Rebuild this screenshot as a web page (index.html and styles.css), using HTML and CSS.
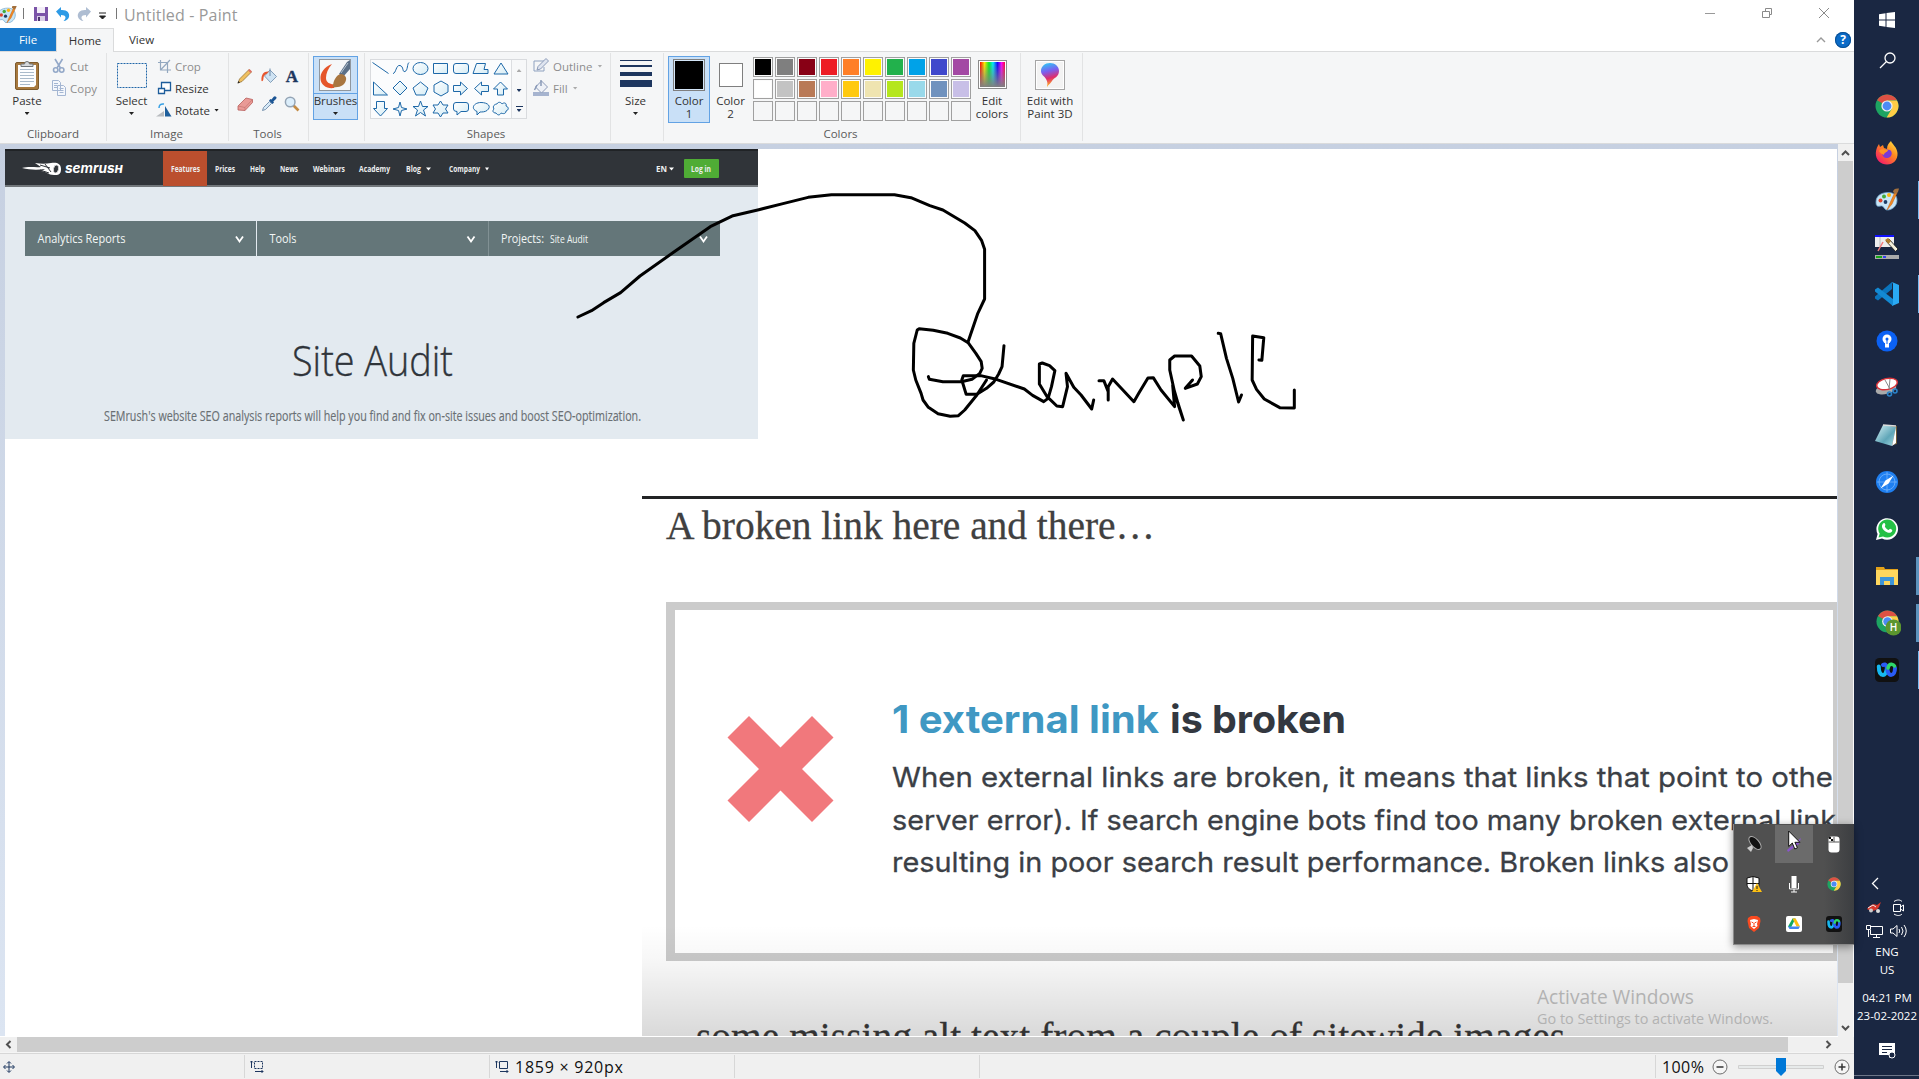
FILE: index.html
```html
<!DOCTYPE html>
<html lang="en">
<head>
<meta charset="utf-8">
<title>Untitled - Paint</title>
<link rel="stylesheet" href="styles.css">
</head>
<body>
<svg class="defs" width="0" height="0">
  <defs>
    <linearGradient id="shapeFill" x1="0" y1="0" x2="1" y2="1"><stop offset="0" stop-color="#fff"/><stop offset="1" stop-color="#d5ecf5"/></linearGradient>
    <linearGradient id="fade" x1="0" y1="0" x2="0" y2="1"><stop offset="0" stop-color="#000" stop-opacity="0"/><stop offset=".3" stop-color="#000" stop-opacity=".03"/><stop offset="1" stop-color="#000" stop-opacity=".15"/></linearGradient>
    <linearGradient id="rainbow"><stop offset="0" stop-color="#f00"/><stop offset=".18" stop-color="#fe0"/><stop offset=".36" stop-color="#0e2"/><stop offset=".52" stop-color="#0ef"/><stop offset=".7" stop-color="#10f"/><stop offset=".86" stop-color="#f0f"/><stop offset="1" stop-color="#f03"/></linearGradient>
    <linearGradient id="toGrey" x1="0" y1="0" x2="0" y2="1"><stop offset="0" stop-color="#808080" stop-opacity="0"/><stop offset="1" stop-color="#808080"/></linearGradient>
    <linearGradient id="drop" x1="0" y1="0" x2=".2" y2="1"><stop offset="0" stop-color="#23d5f5"/><stop offset=".4" stop-color="#7a5ff0"/><stop offset=".7" stop-color="#e02d6c"/><stop offset="1" stop-color="#ffb01f"/></linearGradient>
    <linearGradient id="fox" x1="1" y1="0" x2=".2" y2="1"><stop offset="0" stop-color="#fff14a"/><stop offset=".45" stop-color="#ff8a1e"/><stop offset="1" stop-color="#f5156c"/></linearGradient>
    <linearGradient id="note" x1="0" y1="0" x2="1" y2="1"><stop offset="0" stop-color="#d9f3f7"/><stop offset=".6" stop-color="#5fa6b8"/><stop offset="1" stop-color="#a8dbe4"/></linearGradient>
    <symbol id="chrome" viewBox="0 0 24 24">
      <circle cx="12" cy="12" r="11.5" fill="#1da462"/>
      <path d="M12 12 2.1 6.2A11.5 11.5 0 0 1 22 6.3L12 6.4z" fill="#dd5144"/>
      <path d="M12 6.4H22A11.5 11.5 0 0 1 11.6 23.5L16.8 14.8z" fill="#ffcd46"/>
      <circle cx="12" cy="12" r="5.6" fill="#f1f1f1"/><circle cx="12" cy="12" r="4.4" fill="#4c8bf5"/>
    </symbol>
    <symbol id="webex" viewBox="0 0 24 24">
      <rect width="24" height="24" rx="4.5" fill="#111"/>
      <path d="M3.800 8.500c0 5 1.500 8.500 4.200 8.500s3.500-4 4-7.500" fill="none" stroke="#16b8f0" stroke-width="4" stroke-linecap="round"/>
      <path d="M8 7c3-2 4 2 4.500 5s1.500 5 3.500 5c2.500 0 4-3 4-7" fill="none" stroke="#2a5cf5" stroke-width="4" stroke-linecap="round"/>
      <path d="M13 10c.6-2.500 1.500-4 3.500-3.800 1.500.2 2.500.8 3 1.800" fill="none" stroke="#2fd66a" stroke-width="3.600" stroke-linecap="round"/>
    </symbol>
    <symbol id="palette" viewBox="0 0 24 24">
      <path d="M1 14C1 8 6 4.500 13 4.500c6 0 9 3 9 8s-4 9-9 9.500c-3 .4-3.500-2-5-3.500C6 17 4 19 2.300 18 1.200 17.300 1 16 1 14z" fill="#c9e6f6" stroke="#6fa5cd" stroke-width=".8"/>
      <circle cx="5.500" cy="12.500" r="2" fill="#e0462c"/><circle cx="9" cy="8.500" r="2" fill="#43ab3b"/><circle cx="14" cy="7" r="2" fill="#f9b412"/><circle cx="10.500" cy="14" r="1.900" fill="#1e3e66"/>
      <path d="m12 22 3-7 5-11 2 1-5 11z" fill="#f18a24" stroke="#c25e10" stroke-width=".5"/><path d="M18 4c0-2 2-4 6-3.500-.5 2-1 4.500-3 5.500z" fill="#a3703d"/>
    </symbol>
  </defs>
</svg>

<div class="desktop">
  <main class="window">
    <header class="titlebar">
      <svg class="app-icon" width="17" height="17" viewBox="4 2 20 20"><use href="#palette" width="24" height="24"/></svg>
      <span class="bar"></span>
      <svg class="qa-save" width="14" height="14" viewBox="0 0 14 14"><path d="M0 0h14v14H0z" fill="#7b54a8"/><path d="M3 0h8v6H3z" fill="#f3eef8"/><path d="M3 9h8v5H3z" fill="#d9cfe6"/><path d="M4 10h2v4H4z" fill="#4d3570"/></svg>
      <svg class="qa-undo" width="14" height="14" viewBox="0 0 14 14"><path d="M0 4.500 5 0v3c6-.5 9 3 8 7-.5 2-3 4-5.500 4 3-2.500 3-6-2.500-6v2.500z" fill="#2e9be6"/></svg>
      <svg class="qa-redo" width="14" height="14" viewBox="0 0 14 14"><path d="M14 4.500 9 0v3C3 2.500 0 6 1 10c.5 2 3 4 5.500 4-3-2.500-3-6 2.500-6v2.500z" fill="#aebdd2"/></svg>
      <svg class="qa-more" width="7" height="8" viewBox="0 0 7 8"><path d="M0 1h7M.5 4 3.500 7l3-3z" stroke="#222" fill="#222" stroke-width="1"/></svg>
      <span class="bar"></span>
      <h1 class="title">Untitled - Paint</h1>
      <div class="window-buttons">
        <svg width="12" height="12"><path d="M1 6.500h10" stroke="#999"/></svg>
        <svg width="12" height="12" fill="none" stroke="#8a8a8a"><path d="M1.500 4.500h7v6h-7zM4.500 4V1.500h6v6H9"/></svg>
        <svg width="12" height="12"><path d="m1 1 10 10M11 1 1 11" stroke="#8a8a8a"/></svg>
      </div>
    </header>

    <nav class="tabs">
      <a class="tab tab-file">File</a><a class="tab tab-home">Home</a><a class="tab tab-view">View</a>
      <div class="tab-tools">
        <svg width="10" height="6"><path d="m1 5 4-4 4 4" fill="none" stroke="#999" stroke-width="1.400"/></svg>
        <span class="help">?</span>
      </div>
    </nav>

    <section class="ribbon">
      <div class="group g-clipboard">
        <div class="group-body">
          <div class="big">
            <span class="big-icon"><svg width="24" height="31" viewBox="0 0 24 31"><rect x=".5" y="2.500" width="23" height="27" rx="1.500" fill="#a7793f" stroke="#7c5a2d"/><path d="M3 5h18v20l-2 2H3z" fill="#fcfdff"/><path d="M5 9.500h14M5 12.500h14M5 15.500h14M5 18.500h14M5 21.500h14M5 24.500h10" stroke="#a9bacb"/><path d="M6 6.500V4h3.500a2.500 2.500 0 0 1 5 0H18v2.500z" fill="#d6d9dc" stroke="#6f7478"/></svg></span>
            <span>Paste</span><i class="caret"></i>
          </div>
          <div class="small-list">
            <div class="small off"><svg width="16" height="16" viewBox="0 0 16 16" fill="none" stroke="#93a8c8" stroke-width="1.600"><path d="m4 1 5.500 9M11.500 1 6 10"/><circle cx="4.700" cy="12" r="2.200"/><circle cx="10.700" cy="12" r="2.200"/></svg>Cut</div>
            <div class="small off"><svg width="16" height="16" viewBox="0 0 16 16" fill="#f4f7fc" stroke="#a4b6d2"><path d="M1.500.5h6l2 2v8h-8zM6.500 5.500h6l2 2v8h-8z"/><path d="M3 3.500h4M3 5.500h3M3 7.500h3M8.500 8.500h4M8.500 10.500h4M8.500 12.500h4"/></svg>Copy</div>
          </div>
        </div>
        <div class="group-label">Clipboard</div>
      </div>

      <div class="group g-image">
        <div class="group-body">
          <div class="big">
            <span class="big-icon"><svg width="30" height="25"><rect x=".5" y=".5" width="29" height="24" fill="none" stroke="#1f66a8" stroke-dasharray="2 1"/></svg></span>
            <span>Select</span><i class="caret"></i>
          </div>
          <div class="small-list">
            <div class="small off"><svg width="16" height="16" viewBox="0 0 16 16" fill="none" stroke="#93a8c0" stroke-width="1.200"><path d="M4.500 2v10H15M2 4.500h9.500V15M4.500 12 14 2"/></svg>Crop</div>
            <div class="small"><svg width="16" height="16" viewBox="0 0 16 16" fill="#fff" stroke="#1d5d9b" stroke-width="1.300"><path d="M5.500 2.500h9v8h-9z"/><path d="M2.500 8.500h6v5h-6z"/></svg>Resize</div>
            <div class="small"><svg width="16" height="16" viewBox="0 0 16 16"><path d="M9 4v10.500h6.500z" fill="#1f5f9c"/><path d="M0 14.500h8V9z" fill="#b9bcc0"/><path d="M3 6c0-3 2-4.500 5-4" fill="none" stroke="#37a0e4" stroke-width="1.500"/></svg>Rotate<i class="caret"></i></div>
          </div>
        </div>
        <div class="group-label">Image</div>
      </div>

      <div class="group g-tools">
        <div class="group-body">
          <div class="tool-grid">
            <svg width="16" height="16" viewBox="0 0 16 16"><path d="m1 15 1.500-4L12 1.500l2.500 2.500L5 13.500z" fill="#f0c060" stroke="#8d6b32" stroke-width=".7"/><path d="m11 2.500 1.500-1.500L15 3.500 13.500 5z" fill="#de7468"/><path d="m.5 15.500 1-2.500L3 14.500z" fill="#222"/></svg>
            <svg width="16" height="16" viewBox="0 0 16 16"><path d="m9 2 6.500 6.500-6 6L3.500 8z" fill="#cfe3f3" stroke="#6d8cab" stroke-width=".8"/><path d="M9 .5V8" stroke="#6d8cab"/><path d="M8 3.500C3 3 0 6 .5 13c1 .5 2-.5 2-3 0-2 1.500-3.500 3-4z" fill="#e8552d"/></svg>
            <b class="tool-text">A</b>
            <svg width="16" height="16" viewBox="0 0 16 16"><path d="m1 10 8-8 6.500 1.500v3L8 14.500 1 14z" fill="#e99a96" stroke="#b75e5c" stroke-width=".8"/><path d="m1 10 7 1.500 7.500-8M8 11.500v3" stroke="#c87773" fill="none" stroke-width=".8"/></svg>
            <svg width="16" height="16" viewBox="0 0 16 16"><path d="m1.500 14.500 1-3 6-6 2 2-6 6z" fill="#d6e9f7" stroke="#5f7e9e" stroke-width=".8"/><path d="M8 4.500 11.500 8 13 6.500 12.300 5.600 15 3a1.600 1.600 0 0 0-2.300-2.300L10.500 3.500 9.500 3z" fill="#1c5594"/></svg>
            <svg width="16" height="16" viewBox="0 0 16 16"><path d="m9.500 9.500 5 5" stroke="#c48b45" stroke-width="2.600"/><circle cx="6.200" cy="6" r="4.800" fill="#dceefb" stroke="#94a4b5" stroke-width="1.500"/></svg>
          </div>
        </div>
        <div class="group-label">Tools</div>
      </div>

      <div class="group g-brushes">
        <div class="group-body">
          <div class="big selected split">
            <span class="big-icon"><svg width="32" height="32" viewBox="0 0 32 32"><rect x=".5" y=".5" width="31" height="31" fill="#f5f7f9" stroke="#90979e"/><path d="M13 5C5 8 1 14 1.500 20c.5 6 6 10 13.500 9l2-4c-5 1-10-1-10-6 0-5 2-9 6-14z" fill="#e5552a"/><path d="m20 15 8-12 3-2v9l-7 8z" fill="#5b7088"/><path d="m22 14 7-10" stroke="#b5c3d1"/><path d="M14 28c0-6 3-12 8-13 3 0 6 3 5 6-1 5-6 8-13 7z" fill="#a87640"/></svg></span>
            <span>Brushes</span><i class="caret"></i>
          </div>
        </div>
      </div>

      <div class="group g-shapes">
        <div class="group-body">
          <div class="gallery">
            <svg class="shapes" width="141" height="58" viewBox="0 0 141 58" fill="url(#shapeFill)" stroke="#1d68a8" stroke-width="1">
              <path d="m2.500 3.500 16 11" fill="none"/><path d="M23 14.500c3 0 3-9 7-8s2 7 5 6 2-8 4-9" fill="none"/><ellipse cx="50.500" cy="9.500" rx="7.500" ry="6"/><path d="M63.500 4.500h14v10h-14z"/><rect x="83.500" y="4.500" width="15" height="10" rx="2.500"/><path d="m103 14.500 3.500-10h9l-1.500 6h4v4z"/><path d="m131 4 7 11h-14z"/>
              <path d="M3.500 23v13h14z"/><path d="m30 22 7 7-7 7-7-7z"/><path d="m50.500 23 7.500 6-3 7h-9l-3-7z"/><path d="m71 22 7 4v7l-7 4-7-4v-7z"/><path d="M83.500 26.500h7V23l7 6.500-7 6.500v-3.500h-7z"/><path d="M118.500 26.500h-7V23l-7 6.500 7 6.500v-3.500h7z"/><path d="m130.500 23 7 7h-4v6h-6v-6h-4z"/>
              <path d="m10.500 57-7-7.500h3v-7h8v7h3z"/><path d="m30 43 1.500 5.500L37 50l-5.500 1.500L30 57l-1.500-5.500L23 50l5.500-1.500z"/><path d="m50.500 42 2 5.500H58l-4.500 3.500 2 6-5-3.500-5 3.500 2-6-4.500-3.500h5.500z"/><path d="m70.500 42 2.500 4h5l-2.500 4 2.500 4h-5l-2.500 4-2.500-4h-5l2.500-4-2.500-4h5z"/><path d="M86 43.500h10q2.500 0 2.500 2.500v4q0 2.500-2.500 2.500h-5L87 56v-3.500q-3.500 0-3.500-2.500v-4q0-2.500 2.500-2.500z"/><path d="M107 56v-3.500c-7-3-3-9 4-9s11 4 6 8c-2 1.500-5 1.500-7 1.500z"/><path d="M127 45c1-2.500 4-2 5 0 2-2 5-1 4 2 3 1 3 4 0 5 0 3-3 3-5 2-1 2-3 3-5 0-3 0-4-2-2-4-2-3 1-5 3-5z"/>
            </svg>
            <div class="gallery-scroll"><i class="caret up dim"></i><i class="caret blue"></i><span class="more"><i class="caret blue"></i></span></div>
          </div>
          <div class="small-list">
            <div class="small off"><svg width="16" height="16" viewBox="0 0 16 16"><path d="M1 3h10M1 3v10h10V9" fill="none" stroke="#8fa2c0"/><path d="m4 12 1-3.500 8-8 2.500 2.500-8 8z" fill="#dfe5f0" stroke="#8b9ab8"/></svg>Outline<i class="caret dim"></i></div>
            <div class="small off"><svg width="16" height="16" viewBox="0 0 16 16"><path d="M0 12h16v4H0z" fill="#a6b4cf"/><path d="m8.500 1 6 6-6 6-6-6z" fill="#eef1f7" stroke="#8b9ab8"/><path d="M8 0v6M4 5 1.500 10" stroke="#8b9ab8" stroke-width="1.500"/></svg>Fill<i class="caret dim"></i></div>
          </div>
        </div>
        <div class="group-label">Shapes</div>
      </div>

      <div class="group g-size">
        <div class="group-body">
          <div class="big">
            <span class="big-icon"><svg width="32" height="28" fill="#1d365f"><path d="M0 0h32v1H0zM0 5h32v2H0zM0 12h32v4H0zM0 20h32v7H0z"/></svg></span>
            <span>Size</span><i class="caret"></i>
          </div>
        </div>
      </div>

      <div class="group g-colors">
        <div class="group-body">
          <div class="big selected color-one"><span class="big-icon"><i class="swatch-lg black"></i></span><span>Color</span><span>1</span></div>
          <div class="big color-two"><span class="big-icon"><i class="swatch-lg white"></i></span><span>Color</span><span>2</span></div>
          <div class="palette">
            <i class="c01"></i><i class="c02"></i><i class="c03"></i><i class="c04"></i><i class="c05"></i><i class="c06"></i><i class="c07"></i><i class="c08"></i><i class="c09"></i><i class="c10"></i>
            <i class="c11"></i><i class="c12"></i><i class="c13"></i><i class="c14"></i><i class="c15"></i><i class="c16"></i><i class="c17"></i><i class="c18"></i><i class="c19"></i><i class="c20"></i>
            <i></i><i></i><i></i><i></i><i></i><i></i><i></i><i></i><i></i><i></i>
          </div>
          <div class="big edit-colors">
            <span class="big-icon"><svg width="29" height="29"><rect x=".5" y=".5" width="28" height="28" fill="#fff" stroke="#8b8b8b"/><rect x="2" y="2" width="25" height="25" fill="url(#rainbow)"/><rect x="2" y="2" width="25" height="25" fill="url(#toGrey)"/></svg></span>
            <span>Edit</span><span>colors</span>
          </div>
        </div>
        <div class="group-label">Colors</div>
      </div>

      <div class="group g-paint3d">
        <div class="group-body">
          <div class="big">
            <span class="big-icon"><svg width="30" height="30"><rect x=".5" y=".5" width="29" height="29" fill="#f3f3f3" stroke="#a5a5a5"/><path d="M1.500 1.500h27v27h-27z" fill="none" stroke="#fff"/><path d="M15 3c5 0 9 3.500 9 8 0 6-5.500 7-7 10-1 2-3 3-5 6 .5-3 1-4-1-8-1.500-3-5-4-5-8 0-4.500 4-8 9-8z" fill="url(#drop)"/></svg></span>
            <span>Edit with</span><span>Paint 3D</span>
          </div>
        </div>
      </div>
    </section>

    <section class="workspace">
      <div class="canvas">
        <svg class="drawing" width="1832" height="887" viewBox="5 149 1832 887">
          <!-- site screenshot pasted top left -->
          <g class="site">
            <path d="M5 149h753v290H5z" fill="#e3eaf0"/>
            <path d="M5 149h753v37H5z" fill="#303439"/><path d="M5 149h753v2H5z" fill="#202326"/><path d="M5 185h753v2H5z" fill="#72777b"/>
            <path d="M163 151h44v35h-44z" fill="#bb4f2e"/>
            <path d="M22 168c8-2 14 0 19-1l-6-4c6 1 11 1 16 0 5-1 10 0 10 6s-3 6-7 6c-6 0-8-4-13-4 2-1 3-1 4-2-7 1-15 1-23-1z" fill="#fff"/><ellipse cx="56" cy="169" rx="2.500" ry="4" fill="#303439" stroke="#ddd" stroke-width=".8" transform="rotate(12 56 169)"/><path d="m40 165 10 3M40 170l9 3M45 164l6 8" stroke="#303439"/>
            <text class="logo" x="65" y="173" textLength="58" lengthAdjust="spacingAndGlyphs">semrusн</text>
            <g class="site-nav">
              <text x="171" y="171.500" textLength="29" lengthAdjust="spacingAndGlyphs">Features</text>
              <text x="215" y="171.500" textLength="20" lengthAdjust="spacingAndGlyphs">Prices</text>
              <text x="250" y="171.500" textLength="15" lengthAdjust="spacingAndGlyphs">Help</text>
              <text x="280" y="171.500" textLength="18" lengthAdjust="spacingAndGlyphs">News</text>
              <text x="313" y="171.500" textLength="32" lengthAdjust="spacingAndGlyphs">Webinars</text>
              <text x="359" y="171.500" textLength="31" lengthAdjust="spacingAndGlyphs">Academy</text>
              <text x="406" y="171.500" textLength="15" lengthAdjust="spacingAndGlyphs">Blog</text>
              <text x="449" y="171.500" textLength="31" lengthAdjust="spacingAndGlyphs">Company</text>
              <text x="656" y="171.500" textLength="11" lengthAdjust="spacingAndGlyphs">EN</text>
            </g>
            <path d="M426 167.500h5l-2.500 3zM485 167.500h4l-2 3zM669 167.500h5l-2.500 3z" fill="#fff"/>
            <rect x="684" y="159" width="35" height="19" rx="1" fill="#4fac35"/>
            <g class="site-nav"><text x="691" y="171.500" textLength="20" lengthAdjust="spacingAndGlyphs">Log in</text></g>
            <path d="M25 221h695v35H25z" fill="#647679"/><path d="M256.500 221v35" stroke="#e3eaf0"/><path d="M488.500 221v35" stroke="#819194"/>
            <g class="site-menu">
              <text x="37.500" y="243" textLength="88" lengthAdjust="spacingAndGlyphs">Analytics Reports</text>
              <text x="269.500" y="243" textLength="27" lengthAdjust="spacingAndGlyphs">Tools</text>
              <text x="501" y="243" textLength="43" lengthAdjust="spacingAndGlyphs">Projects:</text>
              <text class="sub" x="550" y="243" textLength="38" lengthAdjust="spacingAndGlyphs">Site Audit</text>
            </g>
            <path d="m236 236.500 3.500 5 3.500-5M467.500 236.500l3.500 5 3.500-5M700 236.500l3.500 5 3.500-5" fill="none" stroke="#fff" stroke-width="1.800"/>
            <text class="site-title" x="292" y="376" textLength="161" lengthAdjust="spacingAndGlyphs">Site Audit</text>
            <text class="site-lead" x="104" y="420.500" textLength="537" lengthAdjust="spacingAndGlyphs">SEMrush's website SEO analysis reports will help you find and fix on-site issues and boost SEO-optimization.</text>
          </g>

          <!-- freehand brush strokes -->
          <g class="brush" transform="translate(560 180) scale(.4847 .33333)">
            <path d="M37 411 65 392 90 368 125 338 165 288 235 216 310 140 357 107 410 89 460 71 512 52 560 44H690L724 53 763 77 790 90 835 129 856 152 870 182 876 208V357L862 400 842 485"/>
            <path d="M760 590 762 598 790 605H828L850 598 866 580 871 565 869 545 858 520 842 488 826 474 800 460 770 451 741 446 737 450 730 490 729 570 734 600 745 640 749 660 760 682 780 701 805 709 822 707 835 690 860 645 880 600"/>
            <path d="M916 497 912 560 905 582 895 606 880 625 860 643H838L829 600 832 587H868L900 598 958 627 975 646 998 665 1007 655 1014 620 1021 572 1010 557 995 549 989 552V612L1005 650 1025 678 1037 680 1047 620 1044 580 1060 622 1075 645 1097 687 1101 660"/>
            <path d="M1112 602H1122L1131 635V660 620L1140 597 1155 620 1184 665 1194 640 1213 594 1224 593 1240 630 1268 680 1264 615 1275 670 1286 720 1270 650 1258 570V540L1268 528H1303L1320 558 1323 590 1315 612 1290 625 1305 600"/>
            <path d="M1358 460 1363 461 1375 535 1388 595 1400 666 1406 645"/>
            <path d="M1442 540 1448 541 1452 473 1429 468 1428 600 1437 628 1453 657 1485 683 1515 684V630"/>
          </g>

          <!-- article screenshot pasted lower right -->
          <g class="article">
            <path d="M642 496h1195v3H642z" fill="#222325"/>
            <text class="serif" x="666" y="539" textLength="489" lengthAdjust="spacingAndGlyphs">A broken link here and there…</text>
            <path d="M666 602h1171v359H666zM675 610v343h1158V610z" fill="#cbcbcb" fill-rule="evenodd"/>
            <path d="m749 716 31.500 31.500L812 716l21.500 21.500L802 769l31.500 31.500L812 822l-31.500-31.500L749 822l-21.500-21.500L759 769l-31.500-31.500z" fill="#f1787c"/>
            <text class="headline link" x="892" y="733" textLength="267" lengthAdjust="spacingAndGlyphs">1 external link</text>
            <text class="headline" x="1170" y="733" textLength="176" lengthAdjust="spacingAndGlyphs">is broken</text>
            <text class="copy" x="892" y="787" textLength="941" lengthAdjust="spacingAndGlyphs">When external links are broken, it means that links that point to othe</text>
            <text class="copy" x="892" y="830" textLength="944" lengthAdjust="spacingAndGlyphs">server error). If search engine bots find too many broken external link</text>
            <text class="copy" x="892" y="872" textLength="837" lengthAdjust="spacingAndGlyphs">resulting in poor search result performance. Broken links also</text>
            <text class="serif dark" x="696" y="1050" textLength="869" lengthAdjust="spacingAndGlyphs">some missing alt text from a couple of sitewide images</text>
            <path d="M642 925h1195v111H642z" fill="url(#fade)"/>
          </g>
          <g class="watermark">
            <text class="large" x="1537" y="1003.500" textLength="157" lengthAdjust="spacingAndGlyphs">Activate Windows</text>
            <text x="1537" y="1024" textLength="236" lengthAdjust="spacingAndGlyphs">Go to Settings to activate Windows.</text>
          </g>
        </svg>
      </div>
      <div class="vscroll">
        <svg width="15" height="17"><path d="m4 11 3.500-3.500L11 11" fill="none" stroke="#505050" stroke-width="2"/></svg>
        <div class="vthumb"></div>
        <svg width="15" height="17"><path d="m4 6 3.500 3.500L11 6" fill="none" stroke="#505050" stroke-width="2"/></svg>
      </div>
    </section>

    <div class="hscroll">
      <svg width="17" height="15"><path d="M10.500 4 7 7.500l3.500 3.500" fill="none" stroke="#505050" stroke-width="2"/></svg>
      <div class="hthumb"></div>
      <svg class="hright" width="17" height="15"><path d="m6.500 4 3.500 3.500L6.500 11" fill="none" stroke="#505050" stroke-width="2"/></svg>
    </div>

    <footer class="status">
      <div class="cell c-pos"><svg width="12" height="12" fill="none" stroke="#1d365f"><path d="M6 1v10M1 6h10M4 2.500 6 .5l2 2M4 9.500l2 2 2-2M2.500 4 .5 6l2 2M9.500 4l2 2-2 2"/></svg></div>
      <div class="cell c-sel"><svg width="14" height="13" fill="none" stroke="#1d365f"><path d="M1.500 1v7M0 2.500 1.500 1 3 2.500M5 11.500h8M11.500 10l1.500 1.500-1.500 1.500"/><path d="M4.500 1.500h8v7h-8z" stroke-dasharray="2 1"/></svg></div>
      <div class="cell c-size"><svg width="14" height="13" fill="none" stroke="#1d365f"><path d="M1.500 1v7M0 2.500 1.500 1 3 2.500M5 11.500h8M11.500 10l1.500 1.500-1.500 1.500M4.500 1.500h8v7h-8z"/></svg><span>1859 × 920px</span></div>
      <div class="cell c-disk"></div>
      <div class="cell c-rest"></div>
      <div class="zoom-tools">
        <span>100%</span>
        <svg width="16" height="16" fill="#f5f5f5" stroke="#6d6d6d"><circle cx="8" cy="8" r="7"/><path d="M4.500 8h7" stroke="#333" stroke-width="1.500"/></svg>
        <svg class="slider" width="86" height="18"><path d="M.5 7.500h85v3H.5z" fill="#e7eaea" stroke="#d0d0d0"/><path d="M38 0h10v13l-5 5-5-5z" fill="#0078d7"/></svg>
        <svg width="16" height="16" fill="#f5f5f5" stroke="#6d6d6d"><circle cx="8" cy="8" r="7"/><path d="M4.500 8h7M8 4.500v7" stroke="#333" stroke-width="1.500"/></svg>
      </div>
    </footer>
  </main>

  <aside class="taskbar">
    <div class="start"><svg width="16" height="16" viewBox="0 0 16 16" fill="#fff"><path d="M0 2.300 6.500 1.300V7.500H0zM7.500 1.100 16 0v7.500H7.500zM0 8.500h6.500v6.200L0 13.700zM7.500 8.500H16V16l-8.500-1.100z"/></svg></div>
    <div class="search"><svg width="17" height="17" fill="none" stroke="#fff" stroke-width="1.300"><circle cx="11" cy="6" r="5"/><path d="M7.500 9.500 1 16"/></svg></div>
    <div class="task"><svg width="24" height="24"><use href="#chrome"/></svg></div>
    <div class="task"><svg width="24" height="24" viewBox="0 0 24 24"><path d="M4 3l1 3 3-2 1 3 3 1c0-4 2-6 4-8 1 3 6 6 6.500 12C23 19 18 23.500 12 23.500S.5 19 .8 12C1 8 2.500 5 4 3z" fill="url(#fox)"/><path d="M7 11c1-3 5-3 8-2 3 2 2 8-3 8-3 0-5-2-5-6z" fill="#7a3bd6"/><path d="M4 10c3-3 6-1 9-1-1 3-4 2-4 5-2-1-4-2-5-4z" fill="#ff9622"/></svg></div>
    <div class="task run"><svg width="24" height="24"><use href="#palette"/></svg></div>
    <div class="task"><svg width="24" height="24" viewBox="0 0 24 24"><path d="M0 0h19v12H0z" fill="#eee"/><path d="M0 0h19v2H0z" fill="#11f"/><path d="M5 2v10" stroke="#bbb"/><path d="m3 16 5-9" stroke="#f47a7a" stroke-width="1.500"/><path d="m11 6 3-2 9 10-2.500 2.500z" fill="#f5f0dc" stroke="#111" stroke-width=".8"/><path d="m10 5 3-2 3 3-2.500 3z" fill="#b07c2c"/><path d="M0 20h24v4H0z" fill="#aaa"/><path d="M1 21h6v2H1z" fill="#15a515"/><path d="M8 21h3v2H8z" fill="#3040f0"/></svg></div>
    <div class="task run"><svg width="24" height="24" viewBox="0 0 24 24"><path d="M17 0v7L3 18.500 0 16.500v-2z" fill="#0a74bd"/><path d="M18 24v-7L3 5.500 0 7.500v2z" fill="#1389d3"/><path d="m17 0 7 3v18l-7 3 1-2V2z" fill="#2aa9f3"/></svg></div>
    <div class="task"><svg width="22" height="22" viewBox="0 0 22 22"><circle cx="11" cy="11" r="10.500" fill="#0b61f4"/><circle cx="11" cy="9" r="4.500" fill="#fff"/><path d="M9 11h4v6.500H9z" fill="#fff"/><circle cx="11" cy="9" r="1.500" fill="#0b61f4"/><path d="M10.500 9h1v5h-1z" fill="#0b61f4"/></svg></div>
    <div class="task"><svg width="24" height="24" viewBox="0 0 24 24"><ellipse cx="11" cy="13" rx="10.500" ry="5" transform="rotate(-15 11 13)" fill="#aaa"/><ellipse cx="12" cy="8" rx="10.500" ry="5.500" transform="rotate(-12 12 8)" fill="#fff" stroke="#d8333a" stroke-width="1.500"/><path d="m10 4 5 9M15 3l-1 10" stroke="#888"/><circle cx="14.500" cy="18" r="2" fill="none" stroke="#2a83c9" stroke-width="1.600"/><circle cx="20" cy="15" r="2" fill="none" stroke="#2a83c9" stroke-width="1.600"/></svg></div>
    <div class="task"><svg width="24" height="24" viewBox="0 0 24 24"><path d="m8 2 14 1v18l-4 1z" fill="#6f5a35"/><path d="m8 2 13 2-4 19L0 18z" fill="url(#note)"/><path d="m21 4-4 19 4-3z" fill="#fff"/><path d="m8 2 13 1" stroke="#ddd" stroke-width="1.500"/></svg></div>
    <div class="task"><svg width="22" height="22" viewBox="0 0 22 22"><circle cx="11" cy="11" r="11" fill="#1f7ff0"/><circle cx="11" cy="11" r="8" fill="none" stroke="#7fb9fa" stroke-width=".7"/><path d="M11 1v20M1 11h20" stroke="#7fb9fa" stroke-width=".7"/><path d="M17.500 4.500 12.500 12.500 4.500 17.500l5-8z" fill="#fff"/></svg></div>
    <div class="task"><svg width="22" height="22" viewBox="0 0 22 22"><path d="M0 22 1.600 16A10.800 10.800 0 1 1 6 20.500z" fill="#fff"/><path d="m2.500 19.500 1.200-4A9 9 0 1 1 7 18.500z" fill="#25c045"/><path d="M7 5.500c1-1 2-.5 2.300 1 .3 1-.8 1.500-.3 2.300 1 1.700 2 2.600 3.500 3.200.8.200 1-1.500 2-1.100 2 .8 2 1.300 1.500 2.600-1.500 2-4 1.500-6.500 0C7 12 4.500 8.500 7 5.500z" fill="#fff"/></svg></div>
    <div class="task run wide"><svg width="22" height="18" viewBox="0 0 22 18"><path d="M0 0h8l1 2h13v16H0z" fill="#e3a21a"/><path d="M0 3h22v15H0z" fill="#ffd75e"/><path d="M4 10h14v8h-4v-4H8v4H4z" fill="#3f95d8"/></svg></div>
    <div class="task run wide"><svg width="27" height="26" viewBox="0 0 27 26"><use href="#chrome" x="2" width="23" height="23"/><circle cx="19.500" cy="17.500" r="8" fill="#5b962f"/><text x="19.500" y="21" class="badge-letter">H</text></svg></div>
    <div class="task run"><svg width="24" height="24"><use href="#webex"/></svg></div>
    <div class="tray">
      <svg class="tray-chevron" width="8" height="13" fill="none" stroke="#fff" stroke-width="1.300"><path d="m7 1-5.500 5.500L7 12"/></svg>
      <svg class="row-start" width="15" height="15" viewBox="0 0 15 15"><path d="M0 9c3-4 6-6 10-4l4-3-2 5c-2 4-8 5-12 2z" fill="#d8382c"/><path d="M1 8 6 5l3 2" stroke="#eee" fill="none"/><circle cx="4" cy="10.500" r="2" fill="#ccc"/><circle cx="11" cy="11" r="2" fill="#ddd"/></svg>
      <svg width="13" height="17" fill="none" stroke="#fff"><path d="M1.500 5.500h7v7h-7zM8.500 8l3-2v6l-3-2M2 2.500c3-2 6-2 8 0M2 15c3 2 6 2 8 0"/></svg>
      <svg width="17" height="14" fill="none" stroke="#fff"><path d="M5 2.500h11.500v8H4.500V6M.5 1.500h4v4h-4zM2.500 5.500v7.500M10.500 10.500v3M7 13.500h7"/></svg>
      <svg width="17" height="14" fill="none" stroke="#fff"><path d="M.5 5v4h2.500l4 3.500v-11L3 5zM9 5q1.500 2 0 4M11.500 3q3 4 0 8M14 1q4.500 6 0 12"/></svg>
    </div>
    <div class="lang">ENG<br>US</div>
    <div class="clock">04:21 PM<br>23-02-2022</div>
    <div class="notify"><svg width="17" height="16" viewBox="0 0 17 16"><path d="M0 0h16v12h-3l-3 3v-3H0z" fill="#fff"/><path d="M3 3.500h10M3 6.500h10M3 9.500h5" stroke="#1a2742"/><circle cx="13" cy="12" r="3" fill="#1a2742" stroke="#fff"/></svg></div>
    <div class="peek"></div>
  </aside>

  <div class="flyout">
    <div><svg width="17" height="17" viewBox="0 0 17 17"><ellipse cx="9" cy="7" rx="4" ry="8" transform="rotate(-42 9 7)" fill="#111" stroke="#aaa"/><path d="m6 9-5 3 4 4 2-4z" fill="#ccc"/></svg></div>
    <div class="hover"><svg width="16" height="18" viewBox="0 0 16 18"><path d="M1 15 15 3 13 9 2 17z" fill="#8a55cc"/></svg></div>
    <div><svg width="12" height="17" viewBox="0 0 12 17"><rect x=".5" y=".5" width="11" height="16" rx="3" fill="#fff"/><path d="M6 1v5M.5 6h11" stroke="#555"/><path d="M1 1h2v2H1zM3 3h2v2H3z" fill="#111"/></svg></div>
    <div><svg width="16" height="17" viewBox="0 0 16 17"><path d="M7 .5 13 2v6c0 4-3 6-6 7-3-1-6-3-6-7V2z" fill="#fff" stroke="#111"/><path d="M7 1v14M1 7.500h12" stroke="#111"/><path d="m11 7 5 9H6z" fill="#fcbf12"/><path d="M11 10v3M11 14v1" stroke="#222"/></svg></div>
    <div><svg width="12" height="17" viewBox="0 0 12 17"><rect x="3.500" width="5" height="12" fill="#fff"/><path d="M1.500 7v6h9V7M6 13v3M3 16h6" stroke="#fff" fill="none"/></svg></div>
    <div><svg width="14" height="14"><use href="#chrome"/></svg></div>
    <div><svg width="14" height="16" viewBox="0 0 14 16"><path d="M4 0h6l3 2 .5 3-1.500 7-5 4-5-4L.5 5 1 2z" fill="#fb4a20"/><path d="m3 4 4-1 4 1-1 4 .5 2L7 13l-3.500-3L4 8z" fill="#fff"/><path d="m4.500 6 2 1M9.500 6l-2 1M7 7v3M5.500 10.500h3" stroke="#fb4a20"/></svg></div>
    <div><svg width="16" height="16" viewBox="0 0 16 16"><rect width="16" height="16" rx="2" fill="#fff"/><path d="M6.500 2.500h3l-5 10L2 10.500z" fill="#11a861"/><path d="M6.500 2.500h3.200L14 10.500H10.500z" fill="#fcbd12"/><path d="M2 10.500h12L12.500 13h-9z" fill="#4285f4"/></svg></div>
    <div><svg width="16" height="16"><use href="#webex"/></svg></div>
    <svg class="cursor" width="13" height="20" viewBox="0 0 13 20"><path d="M.7 1v15.500l3.600-3.500 2.500 6 2.600-1.200-2.500-5.500h5z" fill="#fff" stroke="#111"/></svg>
  </div>
</div>
</body>
</html>
```
FILE: styles.css
```css
* { box-sizing: border-box; }
body {
  margin: 0;
  overflow: hidden;
  font-family: "Open Sans", "Noto Sans", sans-serif;
  font-size: 11.5px;
  color: #333;
}
svg { display: block; flex: none; }
.defs { position: absolute; }
i { font-style: normal; }

.desktop {
  position: relative;
  display: flex;
  width: 1919px;
  height: 1079px;
}
.window {
  display: flex;
  flex-direction: column;
  width: 1854px;
  background: #fff;
}

/* title bar */
.titlebar { display: flex; align-items: center; height: 28px; flex: none; }
.app-icon { margin-right: 6px; }
.bar { width: 1px; height: 11px; background: #777; margin-top: -2px; }
.qa-save { margin-left: 10px; }
.qa-undo { margin-left: 8px; }
.qa-redo { margin-left: 7px; }
.qa-more { margin: 3px 10px 0 8px; }
.title {
  margin: 2px 0 0 7px;
  font-size: 16px;
  font-weight: 400;
  color: #999;
  letter-spacing: .15px;
}
.window-buttons { display: flex; gap: 45px; margin-left: auto; padding-right: 24px; margin-top: -2px; }

/* tabs */
.tabs { display: flex; height: 24px; flex: none; border-bottom: 1px solid #dadbdc; }
.tab { display: flex; justify-content: center; align-items: center; height: 23px; }
.tab-file { width: 56px; background: #1979ca; color: #fff; }
.tab-home { width: 58px; height: 24px; background: #f5f6f7; border: 1px solid #dadbdc; border-bottom: 0; }
.tab-view { width: 55px; }
.tab-tools { display: flex; align-items: center; gap: 9px; margin-left: auto; padding-right: 3px; }
.help {
  width: 16px;
  height: 16px;
  border-radius: 50%;
  background: #0b6bc7;
  box-shadow: inset 0 0 0 1px #0a4f94;
  color: #fff;
  font-weight: 700;
  font-size: 12px;
  line-height: 16px;
  text-align: center;
}

/* ribbon */
.ribbon {
  display: flex;
  height: 92px;
  flex: none;
  background: #f5f6f7;
  border-bottom: 1px solid #dadbdc;
}
.group {
  display: flex;
  flex-direction: column;
  border-style: solid;
  border-width: 0 1px 0 0;
  border-image: linear-gradient(#f5f6f7 2px, #e2e3e4 2px, #e2e3e4 88px, #f5f6f7 88px) 1;
}
.group-body { display: flex; height: 73px; padding-top: 4px; }
.group-label { text-align: center; line-height: 17px; color: #5a5a5a; }
.g-clipboard { width: 107px; }
.g-image { width: 122px; }
.g-tools { width: 80px; }
.g-brushes { width: 56px; }
.g-shapes { width: 246px; }
.g-size { width: 53px; }
.g-colors { width: 357px; }
.g-paint3d { width: 62px; }
.g-shapes .group-label, .g-colors .group-label { margin-left: -3px; }
.g-image .group-label, .g-tools .group-label { margin-left: -2px; }

.big {
  display: flex;
  flex-direction: column;
  align-items: center;
  height: 67px;
  line-height: 13px;
  white-space: nowrap;
}
.big-icon { display: flex; align-items: center; justify-content: center; height: 38px; flex: none; }
.caret {
  width: 5px;
  height: 3px;
  background: #222;
  clip-path: polygon(0 0, 100% 0, 50% 100%);
}
.big .caret { margin-top: 5px; }
.caret.dim { background: #aaa; }
.caret.up { transform: scaleY(-1); }
.caret.blue { background: #1d365f; }
.selected { background: #c9e0f7; border: 1px solid #62a2e4; }
.selected .big-icon { margin-top: -2px; height: 39px; }
.split { height: 64px; background: linear-gradient(#c9e0f7 36px, #62a2e4 36px, #62a2e4 37px, #c9e0f7 37px); }

.small-list { display: flex; flex-direction: column; margin-top: -1px; }
.small { display: flex; align-items: center; height: 22px; gap: 3px; }
.small .caret { margin-left: 1px; }
.off { color: #8d8d8d; }
.g-clipboard .big { width: 54px; }
.g-clipboard .small { margin-left: -3px; }
.g-image .big { width: 49px; }
.g-tools .group-body { padding: 16px 0 0 8px; }
.tool-grid {
  display: grid;
  grid-template: repeat(2, 16px) / repeat(3, 16px);
  gap: 12px 7.5px;
}
.tool-text { font: bold 17px/17px "Liberation Serif", serif; color: #1d365f; text-align: center; -webkit-text-stroke: .4px #1d365f; }
.g-brushes .group-body { padding-left: 4px; }
.g-brushes .big { width: 45px; }
.g-brushes .big-icon { margin-left: -1px; }

.g-shapes .group-body { padding-left: 5px; gap: 6px; }
.gallery {
  display: flex;
  width: 157px;
  height: 60px;
  margin-top: 3px;
  border: 1px solid #d9dbde;
  background: #fbfcfd;
}
.shapes { margin-top: -1px; margin-left: -1px; }
.gallery-scroll {
  display: flex;
  flex-direction: column;
  align-items: center;
  width: 15px;
  margin-left: auto;
  padding-top: 9px;
  gap: 17px;
  border-left: 1px solid #dcdee1;
  background: #f7f8f9;
}
.more { border-top: 1px solid #1d365f; padding-top: 2px; width: 7px; margin-top: -3px; display: flex; justify-content: center; }
.g-shapes .small { gap: 4px; }

.g-size .big { width: 49px; }
.g-size .big-icon svg { margin-top: -2px; }

.g-colors .group-body { padding-left: 4px; }
.color-one { width: 42px; }
.color-two { width: 41px; }
.swatch-lg { display: block; border: 1px solid #7f7f7f; }
.swatch-lg.black { width: 32px; height: 32px; background: #000; box-shadow: inset 0 0 0 1px #d4e6f8; }
.swatch-lg.white { width: 24px; height: 24px; background: #fff; }
.palette {
  display: grid;
  grid-template: repeat(3, 20px) / repeat(10, 20px);
  gap: 2px;
  margin: 1px 2px 0;
}
.palette i { border: 1px solid #a0a0a0; box-shadow: inset 0 0 0 1px #fbfbfb; }
.palette i:nth-child(n+21) { box-shadow: none; }
.c01 { background: #000; } .c02 { background: #7f7f7f; } .c03 { background: #880015; } .c04 { background: #ed1c24; }
.c05 { background: #ff7f27; } .c06 { background: #fff200; } .c07 { background: #22b14c; } .c08 { background: #00a2e8; }
.c09 { background: #3f48cc; } .c10 { background: #a349a4; } .c11 { background: #fff; } .c12 { background: #c3c3c3; }
.c13 { background: #b97a57; } .c14 { background: #ffaec9; } .c15 { background: #ffc90e; } .c16 { background: #efe4b0; }
.c17 { background: #b5e61d; } .c18 { background: #99d9ea; } .c19 { background: #7092be; } .c20 { background: #c8bfe7; }
.edit-colors { width: 38px; }
.edit-colors .big-icon { padding-bottom: 2px; }
.g-paint3d .group-body { justify-content: center; padding-right: 3px; }

/* drawing area */
.workspace { display: flex; height: 893px; flex: none; background: linear-gradient(#c6d0e1, #dce5f2); }
.canvas { width: 1838px; padding: 5px 0 0 5px; overflow: hidden; border-bottom: 1px solid #fff; }
.drawing { background: #fff; }
.vscroll { display: flex; flex-direction: column; width: 16px; background: #f0f0f0; border-right: 1px solid #fafafa; }
.vthumb { height: 822px; background: #cdcdcd; margin-bottom: auto; }
.logo { font: italic 700 13px Inter, sans-serif; fill: #fff; }
.site-nav text { font: 700 9.500px "Open Sans", sans-serif; fill: #eceeef; }
.site-menu text { font: 500 13.500px "Open Sans", sans-serif; fill: #f3f6f6; }
.site-menu .sub { font-size: 10px; }
.site-title { font: 300 43px "Open Sans", sans-serif; fill: #2f343a; stroke: #2f343a; stroke-width: .4px; }
.site-lead { font: 400 14px "Open Sans", sans-serif; fill: #696f73; stroke: #696f73; stroke-width: .15px; }
.brush path {
  fill: none;
  stroke: #000;
  stroke-width: 3px;
  stroke-linejoin: round;
  stroke-linecap: round;
  vector-effect: non-scaling-stroke;
}
.serif { font: 40px "Liberation Serif", serif; fill: #404040; stroke: #404040; stroke-width: .3px; }
.serif.dark { fill: #3a3a3a; }
.headline { font: 700 38px Inter, sans-serif; fill: #333840; }
.headline.link { fill: #3f98c3; }
.copy { font: 400 27.500px Inter, sans-serif; fill: #3b3f46; stroke: #3b3f46; stroke-width: .3px; }
.watermark text { font: 14.500px "Open Sans", sans-serif; fill: #b2b2b2; }
.watermark .large { font-size: 19.500px; }

.hscroll { display: flex; height: 16px; flex: none; background: #f0f0f0; border-bottom: 1px solid #f5f5f5; }
.hthumb { width: 1771px; height: 15px; background: #cdcdcd; }
.hright { margin-left: 32px; }

/* status bar */
.status { display: flex; height: 26px; flex: none; background: #f0f0f0; border-top: 1px solid #d7d7d7; padding-top: 1px; }
.cell { display: flex; align-items: center; gap: 6px; height: 23px; border-right: 1px solid #d7d7d7; }
.cell span, .zoom-tools span { font-size: 16px; color: #111; }
.cell span { letter-spacing: .75px; }
.c-pos { width: 245px; padding-left: 3px; }
.c-sel { width: 245px; padding-left: 5px; }
.c-size { width: 245px; padding-left: 5px; }
.c-disk { width: 245px; }
.c-rest { width: 676px; }
.zoom-tools { display: flex; align-items: center; height: 23px; padding-left: 6px; }
.zoom-tools span { width: 50px; letter-spacing: .4px; }
.slider { margin: 0 10px; }

/* taskbar */
.taskbar { display: flex; flex-direction: column; align-items: center; width: 65px; background: #1a2742; color: #fff; }
.start, .search { display: flex; align-items: center; height: 40px; padding-left: 1px; }
.search { height: 40px; margin-bottom: 2px; }
.task { display: flex; align-items: center; justify-content: center; width: 65px; height: 47px; padding-left: 1px; flex: none; }
.run { background: linear-gradient(#76b9ed, #76b9ed) right center / 1px 38px no-repeat; }
.run.wide { background-size: 3px 38px; background-image: linear-gradient(#5e93bd, #5e93bd); }
.badge-letter { font: 600 10px "Open Sans", sans-serif; fill: #fff; text-anchor: middle; }
.tray {
  display: grid;
  grid-template: repeat(3, 24px) / 24px 24px;
  place-items: center;
  margin-top: 178px;
  width: 48px;
}
.row-start { grid-column: 1; }
.lang, .clock { font-size: 11.500px; line-height: 17.500px; text-align: center; margin-left: 1px; }
.clock { margin-top: 11px; white-space: nowrap; }
.notify { margin-top: 19px; padding-left: 1px; }
.peek { width: 65px; height: 4px; margin-top: auto; border-top: 1px solid #6d7688; }

/* hidden-icons flyout, floats over the window */
.flyout {
  position: absolute;
  left: 1733px;
  top: 824px;
  display: grid;
  grid-template: repeat(3, 40px) / repeat(3, 40px);
  width: 121px;
  height: 121px;
  background: linear-gradient(90deg, #505050 75%, #3c3e41);
  border: 1px solid #8a8a8a;
  border-width: 0 0 1px 1px;
  box-shadow: 0 2px 8px rgba(0, 0, 0, .4);
}
.flyout div { display: flex; align-items: center; justify-content: center; }
.flyout .hover { background: #6b6b6b; margin: 1px; }
.cursor { position: absolute; left: 54px; top: 6px; }
```
